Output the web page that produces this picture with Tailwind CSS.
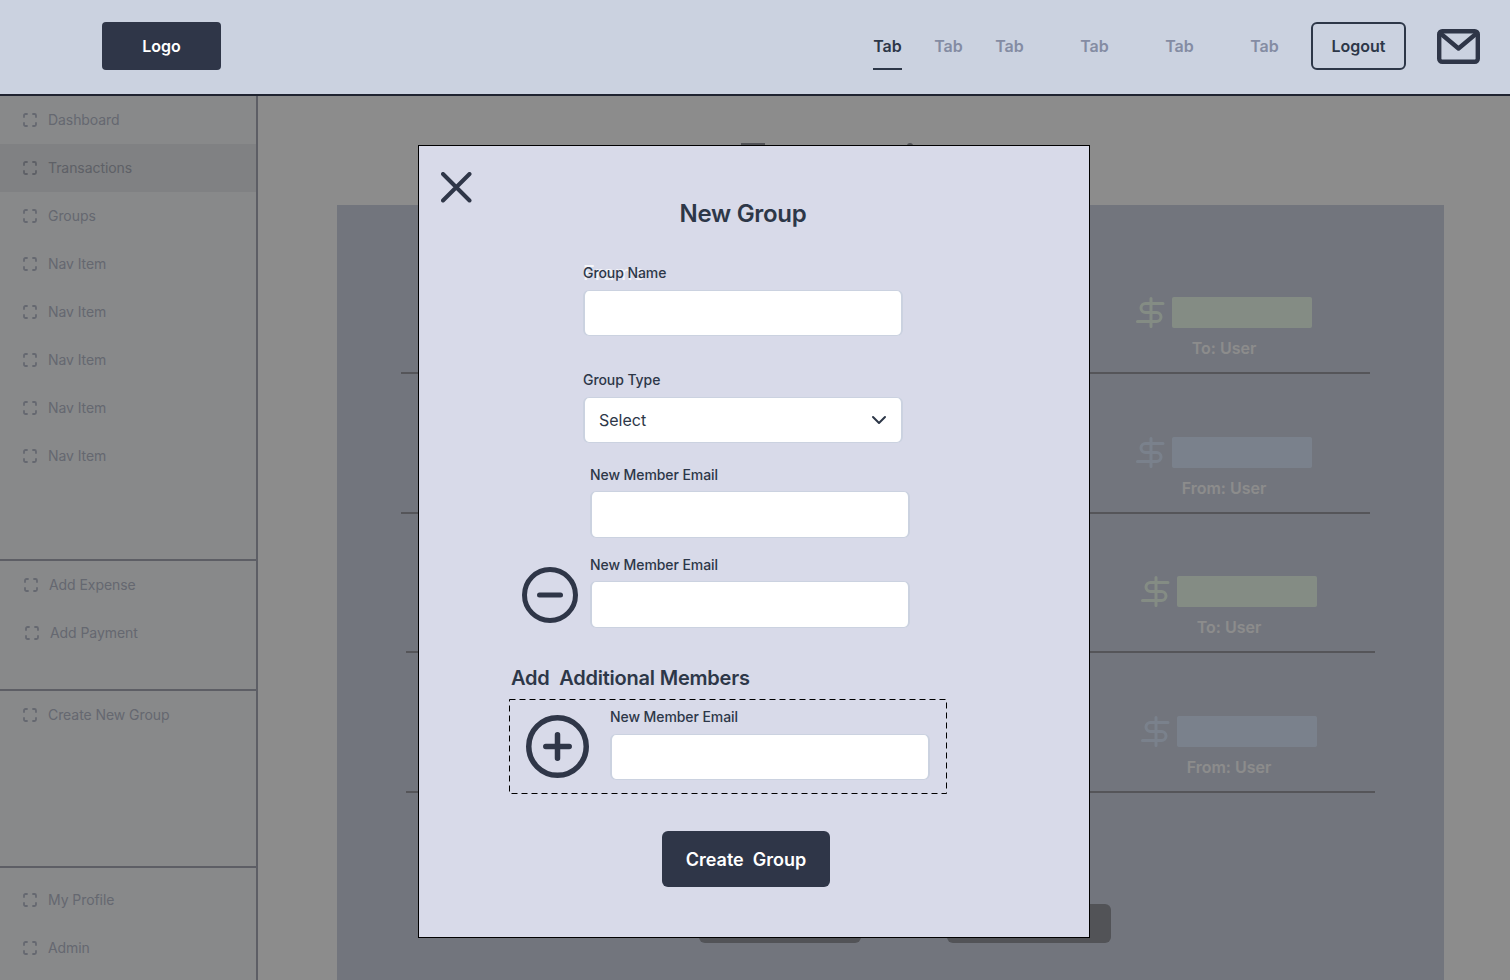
<!DOCTYPE html>
<html>
<head>
<meta charset="utf-8">
<script src="https://cdn.jsdelivr.net/npm/@tailwindcss/browser@4"></script>
</head>
<body>
<div class="relative w-[1510px] h-[980px] overflow-hidden bg-white font-[Inter,sans-serif] text-[#2d3748]">
  <!-- Header -->
  <header class="h-[96px] bg-[#cbd2e0] border-b-2 border-[#1f2330] flex items-center pl-[102px] pb-[2px]">
    <div class="w-[119px] h-[48px] rounded-[4px] bg-[#2f3648] text-white font-semibold text-base flex items-center justify-center">Logo</div>
    <nav class="ml-auto flex h-[48px] text-base font-semibold text-[#848ca3]">
      <div class="w-[29px] border-b-2 border-[#2d3748] text-[#2d3748] flex items-center justify-center pt-[1px]">Tab</div>
      <div class="ml-[32px] w-[29px] flex items-center justify-center pb-[1px]">Tab</div>
      <div class="ml-[32px] w-[29px] flex items-center justify-center pb-[1px]">Tab</div>
      <div class="ml-[56px] w-[29px] flex items-center justify-center pb-[1px]">Tab</div>
      <div class="ml-[56px] w-[29px] flex items-center justify-center pb-[1px]">Tab</div>
      <div class="ml-[56px] w-[29px] flex items-center justify-center pb-[1px]">Tab</div>
    </nav>
    <div class="ml-[32px] w-[95px] h-[48px] rounded-[6px] border-2 border-[#2d3748] font-semibold text-base flex items-center justify-center">Logout</div>
    <svg class="ml-[31px] mr-[30px]" width="43" height="35" viewBox="0 0 43 35" fill="none" stroke="#2f3648" stroke-width="4.4" stroke-linecap="round" stroke-linejoin="round">
      <rect x="2.2" y="2.2" width="38.6" height="30.6" rx="3"/>
      <path d="M3 4L21.5 19.5L40 4"/>
    </svg>
  </header>

  <div class="flex h-[884px]">
    <!-- Sidebar -->
    <aside class="w-[258px] shrink-0 bg-[#f7fafc] border-r-2 border-[#a9abb8] text-sm tracking-[-0.07px] text-[#b9bdcc] flex flex-col">
      <div class="h-[465px] border-b-2 border-[#a9abb8]">
        <div class="h-[48px] flex items-center pl-[23px] gap-[11px]"><svg width="14" height="14" viewBox="0 0 14 14" fill="none" stroke="currentColor" stroke-width="1.8" stroke-linecap="round" stroke-linejoin="round"><path d="M1 4V2.5A1.5 1.5 0 0 1 2.5 1H4M10 1h1.5A1.5 1.5 0 0 1 13 2.5V4M13 10v1.500A1.500 1.500 0 0 1 11.500 13H10M4 13H2.500A1.500 1.500 0 0 1 1 11.500V10"/></svg>Dashboard</div>
        <div class="h-[48px] flex items-center pl-[23px] gap-[11px] bg-[#e9ebee] text-[#abafbb]"><svg width="14" height="14" viewBox="0 0 14 14" fill="none" stroke="currentColor" stroke-width="1.8" stroke-linecap="round" stroke-linejoin="round"><path d="M1 4V2.5A1.5 1.5 0 0 1 2.5 1H4M10 1h1.5A1.5 1.5 0 0 1 13 2.5V4M13 10v1.500A1.500 1.500 0 0 1 11.500 13H10M4 13H2.500A1.500 1.500 0 0 1 1 11.500V10"/></svg>Transactions</div>
        <div class="h-[48px] flex items-center pl-[23px] gap-[11px]"><svg width="14" height="14" viewBox="0 0 14 14" fill="none" stroke="currentColor" stroke-width="1.8" stroke-linecap="round" stroke-linejoin="round"><path d="M1 4V2.5A1.5 1.5 0 0 1 2.5 1H4M10 1h1.5A1.5 1.5 0 0 1 13 2.5V4M13 10v1.500A1.500 1.500 0 0 1 11.500 13H10M4 13H2.500A1.500 1.500 0 0 1 1 11.500V10"/></svg>Groups</div>
        <div class="h-[48px] flex items-center pl-[23px] gap-[11px]"><svg width="14" height="14" viewBox="0 0 14 14" fill="none" stroke="currentColor" stroke-width="1.8" stroke-linecap="round" stroke-linejoin="round"><path d="M1 4V2.5A1.5 1.5 0 0 1 2.5 1H4M10 1h1.5A1.5 1.5 0 0 1 13 2.5V4M13 10v1.500A1.500 1.500 0 0 1 11.500 13H10M4 13H2.500A1.500 1.500 0 0 1 1 11.500V10"/></svg>Nav Item</div>
        <div class="h-[48px] flex items-center pl-[23px] gap-[11px]"><svg width="14" height="14" viewBox="0 0 14 14" fill="none" stroke="currentColor" stroke-width="1.8" stroke-linecap="round" stroke-linejoin="round"><path d="M1 4V2.5A1.5 1.5 0 0 1 2.5 1H4M10 1h1.5A1.5 1.5 0 0 1 13 2.5V4M13 10v1.500A1.500 1.500 0 0 1 11.500 13H10M4 13H2.500A1.500 1.500 0 0 1 1 11.500V10"/></svg>Nav Item</div>
        <div class="h-[48px] flex items-center pl-[23px] gap-[11px]"><svg width="14" height="14" viewBox="0 0 14 14" fill="none" stroke="currentColor" stroke-width="1.8" stroke-linecap="round" stroke-linejoin="round"><path d="M1 4V2.5A1.5 1.5 0 0 1 2.5 1H4M10 1h1.5A1.5 1.5 0 0 1 13 2.5V4M13 10v1.500A1.500 1.500 0 0 1 11.500 13H10M4 13H2.500A1.500 1.500 0 0 1 1 11.500V10"/></svg>Nav Item</div>
        <div class="h-[48px] flex items-center pl-[23px] gap-[11px]"><svg width="14" height="14" viewBox="0 0 14 14" fill="none" stroke="currentColor" stroke-width="1.8" stroke-linecap="round" stroke-linejoin="round"><path d="M1 4V2.5A1.5 1.5 0 0 1 2.5 1H4M10 1h1.5A1.5 1.5 0 0 1 13 2.5V4M13 10v1.500A1.500 1.500 0 0 1 11.500 13H10M4 13H2.500A1.500 1.500 0 0 1 1 11.500V10"/></svg>Nav Item</div>
        <div class="h-[48px] flex items-center pl-[23px] gap-[11px]"><svg width="14" height="14" viewBox="0 0 14 14" fill="none" stroke="currentColor" stroke-width="1.8" stroke-linecap="round" stroke-linejoin="round"><path d="M1 4V2.5A1.5 1.5 0 0 1 2.5 1H4M10 1h1.5A1.5 1.5 0 0 1 13 2.5V4M13 10v1.500A1.500 1.500 0 0 1 11.500 13H10M4 13H2.500A1.500 1.500 0 0 1 1 11.500V10"/></svg>Nav Item</div>
      </div>
      <div class="h-[130px] border-b-2 border-[#a9abb8]">
        <div class="h-[48px] flex items-center pl-[24px] gap-[11px]"><svg width="14" height="14" viewBox="0 0 14 14" fill="none" stroke="currentColor" stroke-width="1.8" stroke-linecap="round" stroke-linejoin="round"><path d="M1 4V2.5A1.5 1.5 0 0 1 2.5 1H4M10 1h1.5A1.5 1.5 0 0 1 13 2.5V4M13 10v1.500A1.500 1.500 0 0 1 11.500 13H10M4 13H2.500A1.500 1.500 0 0 1 1 11.500V10"/></svg>Add Expense</div>
        <div class="h-[48px] flex items-center pl-[25px] gap-[11px]"><svg width="14" height="14" viewBox="0 0 14 14" fill="none" stroke="currentColor" stroke-width="1.8" stroke-linecap="round" stroke-linejoin="round"><path d="M1 4V2.5A1.5 1.5 0 0 1 2.5 1H4M10 1h1.5A1.5 1.5 0 0 1 13 2.5V4M13 10v1.500A1.500 1.500 0 0 1 11.500 13H10M4 13H2.500A1.500 1.500 0 0 1 1 11.500V10"/></svg>Add Payment</div>
      </div>
      <div class="h-[177px] border-b-2 border-[#a9abb8]">
        <div class="h-[48px] flex items-center pl-[23px] gap-[11px]"><svg width="14" height="14" viewBox="0 0 14 14" fill="none" stroke="currentColor" stroke-width="1.8" stroke-linecap="round" stroke-linejoin="round"><path d="M1 4V2.5A1.5 1.5 0 0 1 2.5 1H4M10 1h1.5A1.5 1.5 0 0 1 13 2.5V4M13 10v1.500A1.500 1.500 0 0 1 11.500 13H10M4 13H2.500A1.500 1.500 0 0 1 1 11.500V10"/></svg>Create New Group</div>
      </div>
      <div class="pt-[8px]">
        <div class="h-[48px] flex items-center pl-[23px] gap-[11px]"><svg width="14" height="14" viewBox="0 0 14 14" fill="none" stroke="currentColor" stroke-width="1.8" stroke-linecap="round" stroke-linejoin="round"><path d="M1 4V2.5A1.5 1.5 0 0 1 2.5 1H4M10 1h1.5A1.5 1.5 0 0 1 13 2.5V4M13 10v1.500A1.500 1.500 0 0 1 11.500 13H10M4 13H2.500A1.500 1.500 0 0 1 1 11.500V10"/></svg>My Profile</div>
        <div class="h-[48px] flex items-center pl-[23px] gap-[11px]"><svg width="14" height="14" viewBox="0 0 14 14" fill="none" stroke="currentColor" stroke-width="1.8" stroke-linecap="round" stroke-linejoin="round"><path d="M1 4V2.5A1.5 1.5 0 0 1 2.5 1H4M10 1h1.5A1.5 1.5 0 0 1 13 2.5V4M13 10v1.500A1.500 1.500 0 0 1 11.500 13H10M4 13H2.500A1.500 1.500 0 0 1 1 11.500V10"/></svg>Admin</div>
      </div>
    </aside>

    <!-- Main behind the dialog -->
    <main class="relative flex-1 pl-[79px] pt-[109px]">
      <div class="absolute left-[483px] top-[47px] w-[24px] h-[3px] bg-[#95979e]"></div>
      <div class="absolute left-[649px] top-[47px] w-[6px] h-[3px] rounded-t-full bg-[#95979e]"></div>
      <div class="w-[1107px] h-[775px] bg-[#cfd5e3] pt-[29px]">
        <div class="ml-[64px] w-[969px] h-[140px] border-b-2 border-[#9b9ca2] flex items-end justify-end pr-[58px] pb-[12px]">
          <div class="w-[176px] flex flex-col items-center gap-[8px] text-base font-semibold text-white">
            <div class="w-full flex justify-between"><svg width="30" height="31" viewBox="0 0 30 31" fill="none" stroke="#f1fff0" stroke-width="3" stroke-linecap="round" stroke-linejoin="round"><path d="M15 1.500V29.500M27 6.500H9.500A4.500 4.500 0 0 0 9.500 15.500H20.500A4.500 4.500 0 0 1 20.500 24.500H1.500"/></svg><div class="w-[140px] h-[31px] rounded-[2px] bg-[#f1fff0]"></div></div>
            <div class="leading-[24px]">To: User</div>
          </div>
        </div>
        <div class="ml-[64px] w-[969px] h-[140px] border-b-2 border-[#9b9ca2] flex items-end justify-end pr-[58px] pb-[12px]">
          <div class="w-[176px] flex flex-col items-center gap-[8px] text-base font-semibold text-white">
            <div class="w-full flex justify-between"><svg width="30" height="31" viewBox="0 0 30 31" fill="none" stroke="#deecff" stroke-width="3" stroke-linecap="round" stroke-linejoin="round"><path d="M15 1.500V29.500M27 6.500H9.500A4.500 4.500 0 0 0 9.500 15.500H20.500A4.500 4.500 0 0 1 20.500 24.500H1.500"/></svg><div class="w-[140px] h-[31px] rounded-[2px] bg-[#deecff]"></div></div>
            <div class="leading-[24px]">From: User</div>
          </div>
        </div>
        <div class="-mt-px ml-[69px] w-[969px] h-[140px] border-b-2 border-[#9b9ca2] flex items-end justify-end pr-[58px] pb-[12px]">
          <div class="w-[176px] flex flex-col items-center gap-[8px] text-base font-semibold text-white">
            <div class="w-full flex justify-between"><svg width="30" height="31" viewBox="0 0 30 31" fill="none" stroke="#f1fff0" stroke-width="3" stroke-linecap="round" stroke-linejoin="round"><path d="M15 1.500V29.500M27 6.500H9.500A4.500 4.500 0 0 0 9.500 15.500H20.500A4.500 4.500 0 0 1 20.500 24.500H1.500"/></svg><div class="w-[140px] h-[31px] rounded-[2px] bg-[#f1fff0]"></div></div>
            <div class="leading-[24px]">To: User</div>
          </div>
        </div>
        <div class="ml-[69px] w-[969px] h-[140px] border-b-2 border-[#9b9ca2] flex items-end justify-end pr-[58px] pb-[12px]">
          <div class="w-[176px] flex flex-col items-center gap-[8px] text-base font-semibold text-white">
            <div class="w-full flex justify-between"><svg width="30" height="31" viewBox="0 0 30 31" fill="none" stroke="#deecff" stroke-width="3" stroke-linecap="round" stroke-linejoin="round"><path d="M15 1.500V29.500M27 6.500H9.500A4.500 4.500 0 0 0 9.500 15.500H20.500A4.500 4.500 0 0 1 20.500 24.500H1.500"/></svg><div class="w-[140px] h-[31px] rounded-[2px] bg-[#deecff]"></div></div>
            <div class="leading-[24px]">From: User</div>
          </div>
        </div>
        <div class="ml-[362px] mt-[111px] flex gap-[86px]">
          <div class="w-[162px] h-[39px] rounded-[6px] bg-[#95979e]"></div>
          <div class="w-[164px] h-[39px] rounded-[6px] bg-[#95979e]"></div>
        </div>
      </div>
    </main>
  </div>

  <!-- Dim layer and dialog -->
  <div class="absolute inset-x-0 bottom-0 top-[96px] bg-black/45"></div>
  <div class="absolute left-[418px] top-[145px] w-[672px] h-[793px] bg-[#d8dae9] border border-black">
    <svg class="absolute left-[22px] top-[26px]" width="31" height="31" viewBox="0 0 31 31" fill="none" stroke="#2f3648" stroke-width="4" stroke-linecap="round"><path d="M2 2L28.500 28.500M28.500 2L2 28.500"/></svg>

    <h2 class="pt-[52px] w-[648px] text-center text-2xl leading-[32px] font-semibold tracking-[-0.3px]">New Group</h2>

    <div class="relative ml-[164px] mt-[33px] h-[20px] text-sm font-medium leading-[20px] tracking-[-0.08px]"><span class="absolute left-0 top-0 text-xl leading-[20px] font-medium tracking-[0.5px] text-white/75">Frame</span><span class="relative">Group Name</span></div>
    <div class="ml-[164px] mt-[7px] w-[320px] h-[46px] bg-white border-x-2 border-y border-[#cbd2e0] rounded-[6px]"></div>

    <div class="ml-[164px] mt-[34px] h-[20px] text-sm font-medium leading-[20px] tracking-[-0.08px]">Group Type</div>
    <div class="ml-[164px] mt-[7px] w-[320px] h-[46px] bg-white border-x-2 border-y border-[#cbd2e0] rounded-[6px] flex items-center justify-between pl-[14px] pr-[14px] text-base">
      <span>Select</span>
      <svg width="16" height="10" viewBox="0 0 16 10" fill="none" stroke="#2d3748" stroke-width="2" stroke-linecap="round" stroke-linejoin="round"><path d="M2 2L8 8L14 2"/></svg>
    </div>

    <div class="ml-[171px] mt-[22px] h-[20px] text-sm font-medium leading-[20px] tracking-[-0.08px]">New Member Email</div>
    <div class="ml-[171px] mt-[6px] w-[320px] h-[47px] bg-white border-x-2 border-y border-[#cbd2e0] rounded-[6px]"></div>

    <div class="flex ml-[103px] mt-[17px]">
      <svg class="mt-[12px] mr-[12px]" width="56" height="56" viewBox="0 0 56 56" fill="none" stroke="#2f3648" stroke-width="5" stroke-linecap="round"><circle cx="28" cy="28" r="25.500"/><path d="M17.500 28H38.500"/></svg>
      <div>
        <div class="h-[20px] text-sm font-medium leading-[20px] tracking-[-0.08px]">New Member Email</div>
        <div class="mt-[6px] w-[320px] h-[47px] bg-white border-x-2 border-y border-[#cbd2e0] rounded-[6px]"></div>
      </div>
    </div>

    <div class="ml-[92px] mt-[36px] h-[28px] text-xl leading-[28px] font-semibold tracking-[-0.22px] whitespace-pre">Add  Additional Members</div>

    <div class="relative ml-[90px] mt-[7px] w-[438px] h-[95px] flex pl-[17px] pt-[8px]">
      <svg class="absolute left-0 top-0" width="438" height="95" viewBox="0 0 438 95" fill="none" stroke="#000" stroke-dasharray="6 4"><rect x="0.500" y="0.500" width="437" height="94"/></svg>
      <svg class="mt-[8px] mr-[21px]" width="63" height="63" viewBox="0 0 63 63" fill="none" stroke="#2f3648" stroke-width="5.500" stroke-linecap="round"><circle cx="31.500" cy="31.500" r="28.750"/><path d="M19.800 31.500H43.200M31.500 19.800V43.200"/></svg>
      <div>
        <div class="h-[20px] text-sm font-medium leading-[20px] tracking-[-0.08px]">New Member Email</div>
        <div class="mt-[7px] w-[320px] h-[46px] bg-white border-x-2 border-y border-[#cbd2e0] rounded-[6px]"></div>
      </div>
    </div>

    <div class="ml-[243px] mt-[37px] w-[168px] h-[56px] pt-[2px] rounded-[6px] bg-[#2f3648] text-white text-lg font-semibold flex items-center justify-center whitespace-pre">Create  Group</div>
  </div>
</div>
</body>
</html>
